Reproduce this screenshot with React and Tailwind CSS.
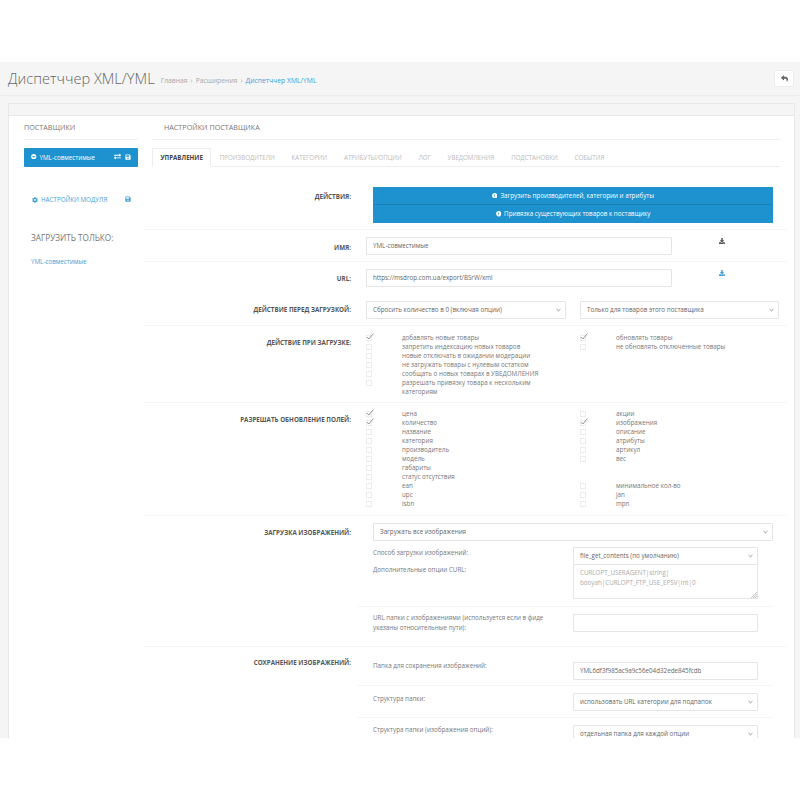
import React from 'react';
import { FaMinusCircle, FaExchangeAlt, FaSave, FaCog, FaExclamationCircle, FaDownload, FaReply } from 'react-icons/fa';

const tabs = ['ПРОИЗВОДИТЕЛИ', 'КАТЕГОРИИ', 'АТРИБУТЫ/ОПЦИИ', 'ЛОГ', 'УВЕДОМЛЕНИЯ', 'ПОДСТАНОВКИ', 'СОБЫТИЯ'];

const onLoadLeft = [
  ['добавлять новые товары', true],
  ['запретить индексацию новых товаров'],
  ['новые отключать в ожидании модерации'],
  ['не загружать товары с нулевым остатком'],
  ['сообщать о новых товарах в УВЕДОМЛЕНИЯ'],
  ['разрешать привязку товара к нескольким категориям'],
];
const onLoadRight = [['обновлять товары', true], ['не обновлять отключенные товары']];

const fieldsLeft = [
  ['цена', true], ['количество', true], ['название'], ['категория'], ['производитель'], ['модель'],
  ['габариты'], ['статус отсутствия'], ['ean'], ['upc'], ['isbn'],
];
const fieldsRight = [
  ['акции'], ['изображения', true], ['описание'], ['атрибуты'], ['артикул'], ['вес'],
  null, null, ['минимальное кол-во'], ['jan'], ['mpn'],
];

const Check = ({ label, checked }) => (
  <div className="flex items-start leading-[9px]">
    <span className="relative mt-[1.5px] w-[6px] h-[6px] shrink-0 border border-[#ececec] bg-white">
      {checked && (
        <svg viewBox="0 0 8 7" className="absolute left-[-1px] top-[-3px] w-[8px] h-[7px]">
          <path d="M0.8 4 L2.8 6 L7.4 0.6" fill="none" stroke="#777" strokeWidth="0.8" />
        </svg>
      )}
    </span>
    <span className="ml-[30px]">{label}</span>
  </div>
);

const Select = ({ children, className }) => (
  <div className={`flex items-center justify-between h-[18px] pl-[6px] pr-[4px] bg-white border border-[#e4e4e4] rounded-[1px] text-[#666] ${className}`}>
    <span>{children}</span>
    <svg viewBox="0 0 6 4" className="w-[5px] h-[4px]">
      <path d="M0.6 0.8 L3 3 L5.4 0.8" fill="none" stroke="#666" strokeWidth="0.8" />
    </svg>
  </div>
);

const Input = ({ children, className }) => (
  <div className={`flex items-center h-[18px] px-[6px] bg-white border border-[#e4e4e4] rounded-[1px] text-[#666] ${className}`}>
    {children}
  </div>
);

const Row = ({ label, children, className }) => (
  <div className={`flex border-b border-[#f5f5f5] ${className}`}>
    <div className="w-[207px] shrink-0 text-right font-bold text-[#555] text-[6.25px] leading-[9px]">{label}</div>
    <div className="flex-1 min-w-0">{children}</div>
  </div>
);

const App = () => {
  return (
    <div className="w-[800px] h-[800px] bg-white overflow-hidden text-[6.25px] text-[#777] font-['Open_Sans',sans-serif]">
      <div className="h-[62px]" />
      <div className="h-[676px] bg-[#f5f5f5] overflow-hidden">
        {/* Header */}
        <div className="flex items-center h-[34px] pl-[8px] pr-[6px] border-b border-[#eeeeee]">
          <h1 className="text-[14.6px] font-light text-[#666] leading-none">Диспетччер XML/YML</h1>
          <div className="flex items-center ml-[6px] mt-[6px] text-[6.8px] text-[#aaa]">
            <span>Главная</span>
            <span className="mx-[3px]">›</span>
            <span>Расширения</span>
            <span className="mx-[3px]">›</span>
            <span className="text-[#3f9fd6]">Диспетччер XML/YML</span>
          </div>
          <div className="ml-auto flex items-center justify-center w-[20px] h-[17px] bg-white border border-[#eeeeee]">
            <FaReply className="text-[7px] text-[#666]" />
          </div>
        </div>

        {/* Panel */}
        <div className="ml-[8px] mr-[5px] mt-[7px] border border-[#e9e9e9] bg-white">
          <div className="h-[12px] bg-[#f5f5f5] border-b border-[#e9e9e9]" />
          <div className="flex pl-[15px]">
            {/* Sidebar */}
            <div className="w-[114px] shrink-0">
              <div className="h-[24px] flex items-center border-b border-[#f0f0f0] text-[7.2px] text-[#777]">ПОСТАВЩИКИ</div>
              <div className="flex items-center h-[19px] mt-[8px] pl-[7px] pr-[7px] bg-[#1e91cf] rounded-[1px] text-white">
                <FaMinusCircle className="text-[5.5px] mr-[3px] -mt-[2px]" />
                <span>YML-совместимые</span>
                <FaExchangeAlt className="ml-auto text-[7px] -mt-[2px]" />
                <FaSave className="ml-[4px] text-[6px] -mt-[2px]" />
              </div>
              <div className="flex items-center mt-[27px] pl-[8px] pr-[7px] text-[#3f9fd6] h-[12px]">
                <FaCog className="text-[6px] mr-[3px]" />
                <span>НАСТРОЙКИ МОДУЛЯ</span>
                <FaSave className="ml-auto text-[6px] -mt-[2px]" />
              </div>
              <div className="mt-[26px] pl-[7px] text-[8.2px] text-[#777] leading-[12px]">ЗАГРУЗИТЬ ТОЛЬКО:</div>
              <div className="mt-[13px] pl-[7px] text-[#3f9fd6] leading-[9px]">YML-совместимые</div>
            </div>

            {/* Main */}
            <div className="flex-1 min-w-0 ml-[6px]">
              <div className="ml-[8px] mr-[14px] h-[24px] flex items-center border-b border-[#f0f0f0] pl-[12px] text-[7.2px] text-[#777]">НАСТРОЙКИ ПОСТАВЩИКА</div>
              <div className="ml-[8px] mr-[14px] mt-[8px] flex h-[19px] border-b border-[#eeeeee] text-[6.2px] text-[#bbb]">
                <div className="flex items-center h-[19px] pt-[1px] px-[7.5px] bg-white border border-[#eeeeee] border-b-white font-bold text-[#444]">УПРАВЛЕНИЕ</div>
                {tabs.map((t) => (
                  <div key={t} className="flex items-center h-[18px] pt-[1px] px-[8.4px]">{t}</div>
                ))}
              </div>

              <div className="mr-[7px]">
                <Row label="ДЕЙСТВИЯ:" className="pt-[20px] h-[63px] [&>div:first-child]:pt-[5px]">
                  <div className="ml-[22px] mr-[14px] text-white">
                    <div className="flex items-center justify-center h-[18px] bg-[#1e91cf] border-b border-[#1a7fb5]">
                      <FaExclamationCircle className="text-[5.5px] mr-[3px]" />Загрузить производителей, категории и атрибуты
                    </div>
                    <div className="flex items-center justify-center h-[18px] bg-[#1e91cf]">
                      <FaExclamationCircle className="text-[5.5px] mr-[3px]" />Привязка существующих товаров к поставщику
                    </div>
                  </div>
                </Row>
                <Row label="ИМЯ:" className="pt-[7px] h-[32px] [&>div:first-child]:pt-[6px]">
                  <div className="flex items-start ml-[15px]">
                    <Input className="w-[306px]">YML-совместимые</Input>
                    <FaDownload className="ml-[47px] mt-[1px] text-[6px] text-[#555]" />
                  </div>
                </Row>
                <Row label="URL:" className="pt-[7px] h-[32px] border-b-0 [&>div:first-child]:pt-[5px]">
                  <div className="flex items-start ml-[15px]">
                    <Input className="w-[306px]">https://msdrop.com.ua/export/BSrW/xml</Input>
                    <FaDownload className="ml-[47px] mt-[1px] text-[6px] text-[#3f9fd6]" />
                  </div>
                </Row>
                <Row label="ДЕЙСТВИЕ ПЕРЕД ЗАГРУЗКОЙ:" className="pt-[7px] h-[32px] [&>div:first-child]:pt-[4px]">
                  <div className="flex ml-[15px] gap-[14px] w-[413px]">
                    <Select className="w-[200px]">Сбросить количество в 0 (включая опции)</Select>
                    <Select className="w-[199px]">Только для товаров этого поставщика</Select>
                  </div>
                </Row>
                <Row label="ДЕЙСТВИЕ ПРИ ЗАГРУЗКЕ:" className="pt-[7px] h-[77px] [&>div:first-child]:pt-[5px]">
                  <div className="flex ml-[15px]">
                    <div className="w-[214px]">
                      {onLoadLeft.map(([l, c]) => <div key={l} className="w-[175px]"><Check label={l} checked={c} /></div>)}
                    </div>
                    <div>
                      {onLoadRight.map(([l, c]) => <Check key={l} label={l} checked={c} />)}
                    </div>
                  </div>
                </Row>
                <Row label="РАЗРЕШАТЬ ОБНОВЛЕНИЕ ПОЛЕЙ:" className="pt-[6px] h-[113px] [&>div:first-child]:pt-[6px]">
                  <div className="flex ml-[15px]">
                    <div className="w-[214px]">
                      {fieldsLeft.map(([l, c]) => <Check key={l} label={l} checked={c} />)}
                    </div>
                    <div>
                      {fieldsRight.map((f, i) => f ? <Check key={f[0]} label={f[0]} checked={f[1]} /> : <div key={i} className="h-[9px]" />)}
                    </div>
                  </div>
                </Row>
                <Row label="ЗАГРУЗКА ИЗОБРАЖЕНИЙ:" className="pt-[7px] h-[131px] [&>div:first-child]:pt-[5px]">
                  <div className="ml-[7px]">
                    <div className="ml-[15px] mr-[14px]">
                      <Select>Загружать все изображения</Select>
                    </div>
                    <div className="flex mt-[6px] h-[60px] pl-[15px] mr-[14px] border-b border-[#f5f5f5]">
                      <div className="w-[200px] pt-[1px]">
                        <div className="leading-[10px] mb-[7px]">Способ загрузки изображений:</div>
                        <div className="leading-[10px]">Дополнительные опции CURL:</div>
                      </div>
                      <div className="w-[185px]">
                        <Select>file_get_contents (по умолчанию)</Select>
                        <div className="relative h-[34px] px-[6px] py-[3px] bg-white border border-t-0 border-[#e4e4e4] text-[#aaa] leading-[10px]">
                          CURLOPT_USERAGENT|string|<br />booyah|CURLOPT_FTP_USE_EPSV|int|0
                          <svg viewBox="0 0 7 7" className="absolute right-0 bottom-0 w-[7px] h-[7px]">
                            <path d="M1 7 L7 1 M3 7 L7 3 M5 7 L7 5" stroke="#999" strokeWidth="0.6" />
                          </svg>
                        </div>
                      </div>
                    </div>
                    <div className="flex mt-[7px] pl-[15px]">
                      <div className="w-[200px] pr-[10px] -mt-[1px] leading-[10px]">URL папки с изображениями (используется если в фиде указаны относительные пути):</div>
                      <Input className="w-[185px]" />
                    </div>
                  </div>
                </Row>
                <Row label="СОХРАНЕНИЕ ИЗОБРАЖЕНИЙ:" className="h-[92px] border-b-0 [&>div:first-child]:pt-[11px]">
                  <div className="ml-[7px] mr-[14px]">
                    <div className="flex items-start h-[39px] pl-[15px] pt-[15px] border-b border-[#f5f5f5]">
                      <div className="w-[200px] -mt-[1px] leading-[10px]">Папка для сохранения изображений:</div>
                      <Input className="w-[185px]">YML6df3f985ac9a9c56e04d32ede845fcdb</Input>
                    </div>
                    <div className="flex items-start h-[32px] pl-[15px] pt-[7px] border-b border-[#f5f5f5]">
                      <div className="w-[200px] mt-[1px] leading-[10px]">Структура папки:</div>
                      <Select className="w-[185px]">использовать URL категории для подпапок</Select>
                    </div>
                    <div className="flex items-start h-[32px] pl-[15px] pt-[7px]">
                      <div className="w-[200px] leading-[10px]">Структура папки (изображения опций):</div>
                      <Select className="w-[185px]">отдельная папка для каждой опции</Select>
                    </div>
                  </div>
                </Row>
              </div>
            </div>
          </div>
        </div>
      </div>
    </div>
  );
};

export default App;
